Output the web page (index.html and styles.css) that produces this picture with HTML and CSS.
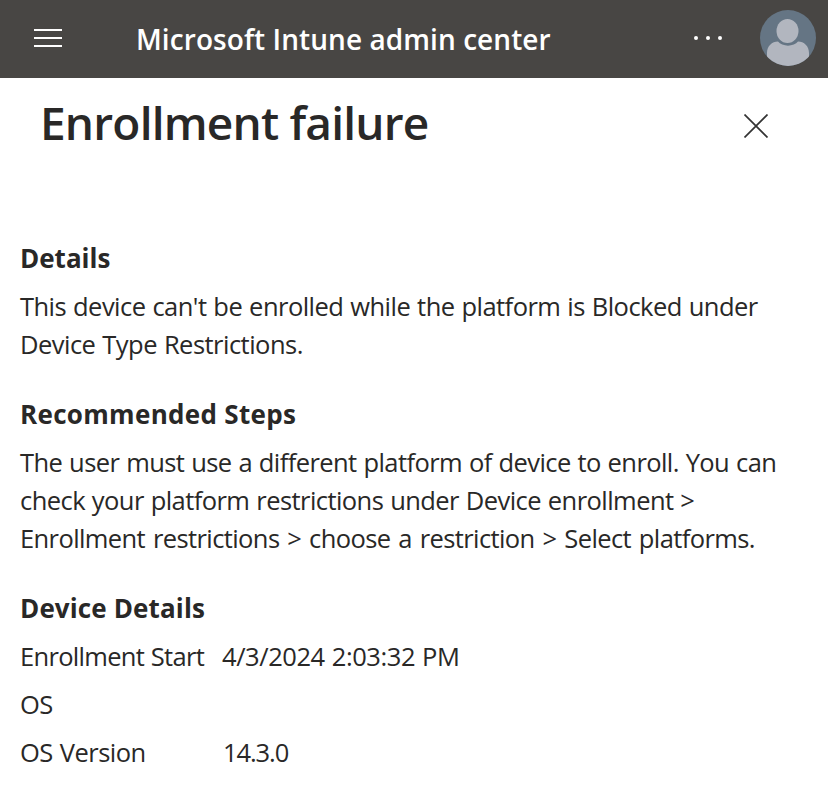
FILE: index.html
```html
<!DOCTYPE html>
<html lang="en">
<head>
<meta charset="utf-8">
<title>Enrollment failure</title>
<link rel="stylesheet" href="styles.css">
</head>
<body>
<header class="topbar">
  <button class="icon-button menu" aria-label="Menu">
    <svg width="28" height="18" viewBox="0 0 28 18" fill="#fff"><path d="M0 0h28v2H0zM0 8h28v2H0zM0 16h28v2H0z"/></svg>
  </button>
  <span class="product">Microsoft Intune admin center</span>
  <button class="icon-button more" aria-label="More">
    <svg width="28" height="4" viewBox="0 0 28 4" fill="#fff"><circle cx="2" cy="2" r="2"/><circle cx="14" cy="2" r="2"/><circle cx="26" cy="2" r="2"/></svg>
  </button>
  <svg class="avatar" width="56" height="56" viewBox="0 0 56 56">
    <defs><clipPath id="disc"><circle cx="28" cy="28" r="28"/></clipPath></defs>
    <g clip-path="url(#disc)">
      <rect width="56" height="56" fill="#657584"/>
      <path d="M7 56V43C7 36 12 31.500 18 31.500C22 37 34 37 38 31.500C44 31.500 49 36 49 43V56Z" fill="#b2b6bf"/>
      <ellipse cx="27.500" cy="21" rx="11" ry="12" fill="#b2b6bf"/>
    </g>
  </svg>
</header>
<main>
  <div class="blade-header">
    <h1>Enrollment failure</h1>
    <button class="icon-button" aria-label="Close">
      <svg width="24" height="24" viewBox="0 0 24 24" fill="none" stroke="#333" stroke-width="1.700"><path d="M.5.500l23 23M23.500.500l-23 23"/></svg>
    </button>
  </div>
  <div class="content">
    <section>
      <h2 class="h-details">Details</h2>
      <p><span class="l1">This device can't be enrolled while the platform is Blocked under</span><br><span class="l2">Device Type Restrictions.</span></p>
    </section>
    <section>
      <h2 class="h-steps">Recommended Steps</h2>
      <p><span class="l3">The user must use a different platform of device to enroll. You can</span><br><span class="l4">check your platform restrictions under Device enrollment &gt;</span><br><span class="l5">Enrollment restrictions &gt; choose a restriction &gt; Select platforms.</span></p>
    </section>
    <section>
      <h2 class="h-device">Device Details</h2>
      <dl>
        <dt><span class="d1">Enrollment Start</span></dt><dd><span class="d2">4/3/2024 2:03:32 PM</span></dd>
        <dt><span class="d3">OS</span></dt><dd></dd>
        <dt><span class="d4">OS Version</span></dt><dd><span class="d5">14.3.0</span></dd>
      </dl>
    </section>
  </div>
</main>
</body>
</html>
```

FILE: styles.css
```css
* { box-sizing: border-box; }
body { margin: 0; background: #fff; color: #292827; font: 25.500px/38px "Open Sans", "Noto Sans", sans-serif; }
h1, h2, p, dl, dd { margin: 0; }
.icon-button { display: flex; border: 0; padding: 0; background: none; }
.topbar { display: flex; align-items: center; height: 78px; padding: 0 12px 2px 34px; background: #484644; }
.product { margin-left: 74px; margin-top: 2px; color: #fff; font-size: 28px; font-weight: 600; letter-spacing: .07px; white-space: nowrap; }
.more { margin-left: auto; }
.avatar { margin-left: 38px; }
.blade-header { display: flex; justify-content: space-between; align-items: center; height: 96px; padding: 0 60px 0 40px; }
h1 { font-size: 46px; font-weight: 600; line-height: 64px; letter-spacing: -.8px; margin-top: -8px; }
.content { padding: 65px 0 0 20px; white-space: nowrap; }
section { margin-bottom: 31px; }
h2 { font-size: 26px; line-height: 38px; font-weight: 700; margin-bottom: 10px; }
p, dl { padding-bottom: 1px; word-spacing: .8px; }
.h-steps { letter-spacing: .32px; }
.h-device { letter-spacing: .13px; }
.l1 { letter-spacing: -.53px; }
.l2 { letter-spacing: -.52px; }
.l3 { letter-spacing: -.58px; }
.l4 { letter-spacing: -.56px; }
.l5 { letter-spacing: -.6px; word-spacing: 1.800px; }
.d1 { letter-spacing: -.7px; }
.d2 { letter-spacing: -.43px; }
.d3, .d4 { letter-spacing: -.5px; }
.d5 { letter-spacing: -1.100px; margin-left: 1px; }
dl { display: grid; grid-template-columns: 202px 1fr; grid-auto-rows: 38px; row-gap: 10px; }
```
